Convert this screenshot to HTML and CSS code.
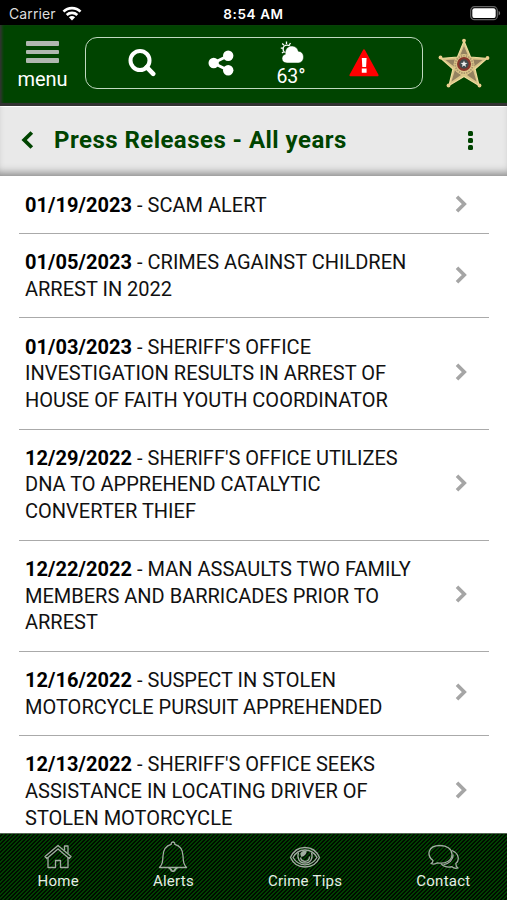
FILE: index.html
```html
<!DOCTYPE html>
<html lang="en">
<head>
    <meta charset="UTF-8">
    <meta name="viewport" content="width=device-width, initial-scale=1.0">
    <title>Press Releases</title>
    <link rel="stylesheet" href="styles.css">
</head>
<body>
    <div class="status-bar">
        <div class="carrier">
            <span>Carrier</span>
            <svg width="20" height="15" viewBox="0 0 20 15" fill="none" stroke="#fff" stroke-width="2.7">
                <path d="M1.5 5.6C6.2.9 13.8.9 18.5 5.6"/>
                <path d="M4.7 9C7.7 6.2 12.3 6.2 15.3 9"/>
                <path d="M10 14.4L6.9 11.2C8.6 9.7 11.4 9.7 13.1 11.2Z" fill="#fff" stroke="none"/>
            </svg>
        </div>
        <div class="clock">8:54 AM</div>
        <div class="battery">
            <svg width="31" height="15" viewBox="0 0 31 15">
                <rect x=".7" y=".7" width="26.6" height="13" rx="3.8" fill="#000" stroke="#666" stroke-width="1.2"/>
                <rect x="2.3" y="2.3" width="23.4" height="9.8" rx="2.2" fill="#fff"/>
                <path d="M28.6 5c2 .7 2 3.7 0 4.4z" fill="#777"/>
            </svg>
        </div>
    </div>

    <header>
        <div class="menu">
            <div class="bars"><i></i><i></i><i></i></div>
            <span>menu</span>
        </div>
        <div class="toolbar">
            <svg class="search" width="28" height="28" viewBox="0 0 28 28" fill="none" stroke="#fff">
                <circle cx="12" cy="11.5" r="9.5" stroke-width="4"/>
                <path d="M18.7 18.2L25.2 24.8" stroke-width="4.6" stroke-linecap="round"/>
            </svg>
            <svg class="share" width="26" height="26" viewBox="0 0 26 26" fill="#fff">
                <path d="M20.5 5.5L5.5 13L20.5 20.5" fill="none" stroke="#fff" stroke-width="3"/>
                <circle cx="5.7" cy="13" r="5.2"/>
                <circle cx="20.2" cy="5.7" r="5.2"/>
                <circle cx="20.2" cy="20.3" r="5.2"/>
            </svg>
            <div class="weather">
                <svg width="24" height="23" viewBox="0 0 24 23" fill="#fff">
                    <circle cx="7" cy="8" r="3.9" fill="none" stroke="#fff" stroke-width="1.4"/>
                    <path d="M6.5.5V3M2.2 2.5L4 4.2M.8 7.2H3M2 12L3.7 10.7M10.5 2L9.3 3.8" stroke="#fff" stroke-width="1.3"/>
                    <path d="M7 22C3.9 22 2 20.2 2 17.6c0-2.2 1.3-3.9 3.3-4.3C4.6 8.8 7.6 5 11.8 5c3.3 0 5.9 2.1 6.5 5.2 3.2.2 5.2 2.6 5.2 5.7 0 3.6-2.3 6.1-5.9 6.1z" stroke="#004400" stroke-width=".5"/>
                </svg>
                <span>63°</span>
            </div>
            <svg class="warning" width="30" height="28" viewBox="0 0 30 28">
                <path d="M15 1.5L28.5 26.2H1.5Z" fill="#f00" stroke="#f00" stroke-width="2.2" stroke-linejoin="round"/>
                <path d="M12.8 9h4.8l-.5 9h-3.8zM12.8 19.5h4.8v4.2h-4.8z" fill="#fff"/>
            </svg>
        </div>
        <svg class="badge" width="52" height="50" viewBox="0 0 52 50">
            <path d="M26 3L32.5 19L49 20.5L37 31L41 47.5L26 38.5L11 47.5L15 31L3 20.5L19.5 19Z" fill="#d9c487" stroke="#eedb9e" stroke-width="1.2"/>
            <path d="M26 8L30.2 18H21.8ZM44.5 22L36 28.5L34 21.5ZM38.5 43.5L29 37L35 32ZM13.5 43.5L23 37L17 32ZM7.5 22L16 28.5L18 21.5Z" fill="#948260"/>
            <g fill="#eccf8e">
                <circle cx="26" cy="2.6" r="1.9"/>
                <circle cx="49.5" cy="20" r="1.9"/>
                <circle cx="41.5" cy="47.5" r="1.9"/>
                <circle cx="10.5" cy="47.5" r="1.9"/>
                <circle cx="2.5" cy="19.5" r="1.9"/>
            </g>
            <circle cx="26" cy="26.5" r="10.5" fill="#dfc78b"/>
            <circle cx="26" cy="26.5" r="8.7" fill="none" stroke="#ab986d" stroke-width="1.8" stroke-dasharray="1.5 1"/>
            <circle cx="26" cy="26" r="7" fill="#87352a"/>
            <circle cx="26" cy="26" r="4.7" fill="#41494b"/>
            <path d="M26 22.5l.9 2.3 2.5.1-2 1.5.7 2.5-2.1-1.4-2.1 1.4.7-2.5-2-1.5 2.5-.1z" fill="#eee"/>
        </svg>
    </header>

    <div class="title-bar">
        <svg width="13" height="18" viewBox="0 0 13 18" fill="none" stroke="#004400" stroke-width="3.8">
            <path d="M10.8 1.5L3.2 9L10.8 16.5"/>
        </svg>
        <h1>Press Releases - All years</h1>
        <div class="dots"><i></i><i></i><i></i></div>
    </div>

    <main>
        <a class="release">
            <p><b>01/19/2023</b> - SCAM ALERT</p>
            <svg class="chevron" viewBox="0 0 12 18"><path d="M2 1.7L9.3 9L2 16.3"/></svg>
        </a>
        <a class="release">
            <p><b>01/05/2023</b> - CRIMES AGAINST CHILDREN ARREST IN 2022</p>
            <svg class="chevron" viewBox="0 0 12 18"><path d="M2 1.7L9.3 9L2 16.3"/></svg>
        </a>
        <a class="release">
            <p><b>01/03/2023</b> - SHERIFF'S OFFICE INVESTIGATION RESULTS IN ARREST OF HOUSE OF FAITH YOUTH COORDINATOR</p>
            <svg class="chevron" viewBox="0 0 12 18"><path d="M2 1.7L9.3 9L2 16.3"/></svg>
        </a>
        <a class="release">
            <p><b>12/29/2022</b> - SHERIFF'S OFFICE UTILIZES DNA TO APPREHEND CATALYTIC CONVERTER THIEF</p>
            <svg class="chevron" viewBox="0 0 12 18"><path d="M2 1.7L9.3 9L2 16.3"/></svg>
        </a>
        <a class="release">
            <p><b>12/22/2022</b> - MAN ASSAULTS TWO FAMILY MEMBERS AND BARRICADES PRIOR TO ARREST</p>
            <svg class="chevron" viewBox="0 0 12 18"><path d="M2 1.7L9.3 9L2 16.3"/></svg>
        </a>
        <a class="release">
            <p><b>12/16/2022</b> - SUSPECT IN STOLEN MOTORCYCLE PURSUIT APPREHENDED</p>
            <svg class="chevron" viewBox="0 0 12 18"><path d="M2 1.7L9.3 9L2 16.3"/></svg>
        </a>
        <a class="release">
            <p><b>12/13/2022</b> - SHERIFF'S OFFICE SEEKS ASSISTANCE IN LOCATING DRIVER OF STOLEN MOTORCYCLE</p>
            <svg class="chevron" viewBox="0 0 12 18"><path d="M2 1.7L9.3 9L2 16.3"/></svg>
        </a>
    </main>

    <nav>
        <a class="tab">
            <svg width="32" height="32" viewBox="0 0 32 32">
                <path d="M6 17.5V27.5H13.5V20.5H18.5V27.5H26V17.5"/>
                <path d="M3 16.5L16 5.5L29 16.5L27.2 18.5L16 9L4.8 18.5Z"/>
                <path d="M22.5 10.5V6H26V13.5"/>
            </svg>
            <span>Home</span>
        </a>
        <a class="tab">
            <svg width="32" height="32" viewBox="0 0 32 32">
                <path d="M2.5 27.5C5.5 24.5 5.7 21.5 6 16C6.2 9.5 9.5 5.5 14.2 4.3C14 1.2 18 1.2 17.8 4.3C22.5 5.5 25.8 9.5 26 16C26.3 21.5 26.5 24.5 29.5 27.5Z"/>
                <path d="M12 27.7C12.5 29 14 28.8 14 30C14.5 31.5 17.5 31.5 18 30C18 28.8 19.5 29 20 27.7" stroke-width="1.8"/>
            </svg>
            <span>Alerts</span>
        </a>
        <a class="tab">
            <svg width="32" height="32" viewBox="0 0 32 32">
                <path d="M1.5 17.5C4.5 10.5 9.5 7.5 16 7.5S27.5 10.5 30.5 17.5C27.5 24.5 22.5 27 16 27S4.5 24.5 1.5 17.5Z"/>
                <path d="M4 17.5C7 12 11 10 16 10S25 12 28 17.5C25 22.5 21 24.8 16 24.8S7 22.5 4 17.5Z"/>
                <path d="M9.5 12.5C7.5 18 10.5 23 16 23S24.5 18 22.5 12.5"/>
                <path d="M12 13.5C13 11.5 15 11 17 11.5C16.5 14 15 15.5 12.5 16Z" fill="#a0aca0"/>
                <path d="M11.5 17.5C12 20 13.5 21.3 16 21.3S20.5 19.5 20.5 16.5"/>
            </svg>
            <span>Crime Tips</span>
        </a>
        <a class="tab">
            <svg width="32" height="32" viewBox="0 0 32 32">
                <path d="M4 23.5C5.5 22.7 6 22 6 20.5C-.5 15.5.5 5.5 13 5.5C20.2 5.5 25 9.3 25 14.5C25 20.5 18.5 24.5 10.5 22.8C8.5 24.2 6.5 24.5 4 23.5Z"/>
                <path d="M25 10.5C32.5 13.5 32.5 21 28.8 23.5C28.8 25.5 29.3 27 31 28C28.3 28.8 26.3 28 25 26.7C20.5 28 16 26.5 14 23.7"/>
                <path d="M26.2 14.5C26.2 20 22 24 16.5 24.7"/>
            </svg>
            <span>Contact</span>
        </a>
    </nav>
</body>
</html>
```
FILE: styles.css
```css
* {
    box-sizing: border-box;
}

body {
    margin: 0;
    height: 900px;
    display: flex;
    flex-direction: column;
    overflow: hidden;
    background: #fff;
    color: #111;
    font-family: Roboto, "Liberation Sans", sans-serif;
}

svg {
    display: block;
    flex: none;
}

/* Phone status bar */
.status-bar {
    flex: none;
    height: 25px;
    padding: 2px 6px 0 9px;
    display: grid;
    grid-template-columns: 1fr auto 1fr;
    align-items: center;
    background: #000;
    color: #fff;
    font-family: Inter, "Liberation Sans", sans-serif;
    font-size: 14px;
}

.carrier {
    display: flex;
    align-items: center;
    gap: 6px;
    color: #ddd;
    letter-spacing: 0.1px;
}

.clock {
    font-weight: 600;
    font-size: 13.5px;
    letter-spacing: 0.6px;
    margin-right: 3px;
}

.battery {
    justify-self: end;
}

header {
    flex: none;
    height: 81px;
    display: flex;
    align-items: flex-start;
    background: #004400;
    color: #fff;
    border-bottom: 3px solid #333;
    box-shadow: inset 3px 0 3px -1px #333;
}

.menu {
    width: 85px;
    padding-top: 16px;
    display: flex;
    flex-direction: column;
    align-items: center;
    font-size: 20px;
    line-height: 24px;
}

.bars {
    display: flex;
    flex-direction: column;
    gap: 4px;
    margin-bottom: 4px;
}

.bars i {
    width: 33px;
    height: 4.5px;
    border-radius: 1px;
    background: #b0b8b0;
}

.toolbar {
    width: 338px;
    height: 52px;
    margin-top: 12px;
    padding-left: 42px;
    display: flex;
    align-items: center;
    border: 1.5px solid #c0d8c0;
    border-radius: 12px;
}

.share {
    margin-left: 52px;
}

.weather {
    width: 40px;
    height: 44px;
    margin-left: 37px;
    display: flex;
    flex-direction: column;
    align-items: center;
    font-size: 19.5px;
    line-height: 25px;
}

.weather svg {
    margin-left: 2px;
}

.warning {
    margin-left: 38px;
}

.badge {
    margin: 13px 0 0 15px;
}

.title-bar {
    flex: none;
    height: 70px;
    padding: 0 34px 2px 21px;
    display: flex;
    align-items: center;
    background: #e9e9e9;
    color: #004400;
    box-shadow: inset 0 -8px 8px -5px #888, inset 0 1px 0 #fff;
}

.title-bar h1 {
    flex: 1;
    margin: 0 0 0 20px;
    font-size: 24px;
    font-weight: 700;
    letter-spacing: 0.46px;
}

.dots {
    display: flex;
    flex-direction: column;
    gap: 2px;
}

.dots i {
    width: 5px;
    height: 5px;
    border-radius: 1.5px;
    background: #004400;
}

main {
    flex: 1;
    min-height: 0;
    overflow: hidden;
    padding: 0.7px 18px 0 19px;
}

.release {
    display: flex;
    align-items: center;
    justify-content: space-between;
    padding: 15.1px 22px 14.6px 6px;
    border-bottom: 1px solid #aaa;
}

.release p {
    width: 398px;
    margin: 0;
    font-size: 20px;
    line-height: 26.8px;
}

.release b {
    color: #000;
    letter-spacing: 0.05px;
}

.chevron {
    width: 12px;
    height: 18px;
    margin-bottom: 3px;
    fill: none;
    stroke: #a5a5a5;
    stroke-width: 3.6;
}

/* Bottom tabs over a diagonal weave */
nav {
    flex: none;
    height: 67px;
    display: flex;
    background: repeating-linear-gradient(135deg, #004000 0, #004000 0.8px, #000a00 1.4px, #000a00 2.2px, #004000 2.828px);
    border-top: 1px solid #526552;
    color: #e4eee4;
}

.tab {
    flex: 1 1 auto;
    padding: 6px 0 0 1px;
    display: flex;
    flex-direction: column;
    align-items: center;
    font-size: 15px;
    line-height: 19px;
    letter-spacing: 0.25px;
}

.tab svg {
    fill: none;
    stroke: #a0aca0;
    stroke-width: 1.3;
    stroke-linejoin: round;
}
```
